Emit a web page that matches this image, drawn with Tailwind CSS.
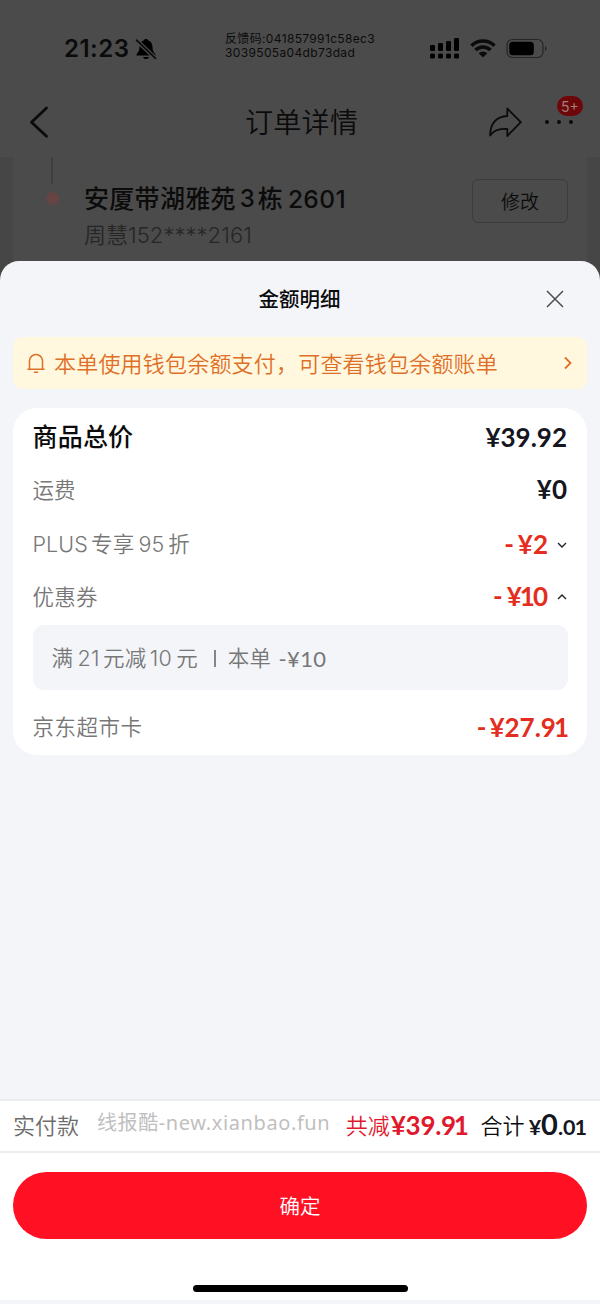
<!DOCTYPE html>
<html lang="zh-CN">
<head>
<meta charset="utf-8">
<title>订单详情</title>
<script src="https://cdn.jsdelivr.net/npm/@tailwindcss/browser@4"></script>
</head>
<body class="bg-[#4b4b4b]">
<div class="flex h-[1304px] w-[600px] flex-col overflow-hidden bg-[#4b4b4b] font-['Inter','Noto_Sans_CJK_SC',sans-serif] whitespace-nowrap text-[#0b0b0c]">

  <!-- status bar -->
  <div class="flex h-[87px] shrink-0 items-start pl-16 pt-[33px]">
    <div class="flex h-8 w-[70px] items-center text-[24px] font-semibold tracking-[0.5px]">21:23</div>
    <svg class="mt-1 h-6 w-6" viewBox="0 0 24 24">
      <path d="M12 2c-1.300 0-2 .7-2.300 1.500C6.500 4.500 5.700 7 5.500 10c-.2 4-1 5-3 7.200V18.500h19V17.200c-2-2.200-2.800-3.200-3-7.200-.2-3-1-5.500-4.200-6.500C14 2.700 13.300 2 12 2zM9 20c.6 1.500 1.600 2 3 2s2.400-.5 3-2z"/>
      <path d="M3 3.700 20.500 20.500" stroke="#4b4b4b" stroke-width="4.200"/>
      <path d="M2.500 3.200 21.500 21.300" stroke="#0b0b0c" stroke-width="1.700" stroke-linecap="round"/>
    </svg>
    <div class="ml-[67px] w-[205px] text-[12px] leading-[14px] tracking-[0.35px] -mt-px">反馈码:041857991c58ec3<br>3039505a04db73dad</div>
    <svg class="mt-[5px] h-[22px] w-[30px]" viewBox="0 0 30 22">
      <rect x="0" y="7" width="5" height="6" rx="1.300"/><rect x="8" y="5" width="5" height="8" rx="1.300"/><rect x="16" y="3" width="5" height="10" rx="1.300"/><rect x="24" y="0" width="5" height="13" rx="1.300"/>
      <rect x="0" y="15.500" width="5" height="5" rx="1.500"/><rect x="8" y="15.500" width="5" height="5" rx="1.500"/><rect x="16" y="15.500" width="5" height="5" rx="1.500"/><rect x="24" y="15.500" width="5" height="5" rx="1.500"/>
    </svg>
    <svg class="ml-[10px] mt-[5px] h-[20px] w-[26px]" viewBox="0 0 26 20" fill="none" stroke="#0b0b0c">
      <path d="M1.500 7.700a16.500 16.500 0 0 1 23 0" stroke-width="3.600"/>
      <path d="M5.500 12a10.800 10.800 0 0 1 15 0" stroke-width="3.400"/>
      <path d="M8.700 15.300a6.200 6.200 0 0 1 8.600 0L13 19.500z" fill="#0b0b0c" stroke="none"/>
    </svg>
    <svg class="ml-[10px] mt-[5px] h-[20px] w-[42px]" viewBox="0 0 42 20">
      <rect x="1" y="1.500" width="36" height="18" rx="5.500" fill="none" stroke="#252525" stroke-width="1.200"/>
      <rect x="3.300" y="3.800" width="24.500" height="13.400" rx="3.500"/>
      <path d="M39 8c2 .8 2 4.200 0 5z" fill="#252525"/>
    </svg>
  </div>

  <!-- navigation bar -->
  <div class="flex h-[70px] shrink-0 items-center">
    <svg class="ml-7 h-9 w-[22px]" viewBox="0 0 22 36" fill="none" stroke="#0b0b0c" stroke-width="2.800" stroke-linecap="round" stroke-linejoin="round"><path d="M18.500 4 3.500 18.200 18.500 32.200"/></svg>
    <div class="ml-[195px] mt-[2px] w-[242px] text-[28px] leading-[36px] tracking-[0.3px] font-[350]">订单详情</div>
    <svg class="-mt-px h-[34px] w-[36px]" viewBox="0 0 36 34" fill="none" stroke="#0b0b0c" stroke-width="1.800" stroke-linejoin="round"><path d="M20.300 3.500 33.800 17.200 20.300 31V24C12 23 7 25 3.200 30.500 3 19 9 11.500 20.300 11z"/></svg>
    <div class="relative ml-[22px] flex gap-2">
      <i class="h-1 w-1 rounded-full bg-[#0b0b0c]"></i><i class="h-1 w-1 rounded-full bg-[#0b0b0c]"></i><i class="h-1 w-1 rounded-full bg-[#0b0b0c]"></i>
      <div class="absolute -top-[24px] left-[12px] flex h-5 w-[26px] items-center justify-center rounded-full bg-[#6e0709] text-[14px] text-[#a07c7c]">5+</div>
    </div>
  </div>

  <!-- address card behind the sheet -->
  <div class="flex h-[104px] shrink-0 bg-[#464646] px-[13px]">
    <div class="flex h-full w-full bg-[#4b4b4b]">
      <div class="ml-[32px] flex w-[14px] flex-col items-center">
        <div class="h-[27px] w-[1.500px] bg-[#404040]"></div>
        <div class="mt-[8px] h-[13px] w-[13px] rounded-full bg-[#674444]"></div>
      </div>
      <div class="ml-[25px] w-[388px]">
        <div class="mt-[24px] flex h-[36px] items-center text-[25px] font-medium"><span class="mt-px tracking-[0.3px]">安厦带湖雅苑</span><span class="ml-[4px] text-[24px]">3</span><span class="mt-px ml-[3px]">栋</span><span class="ml-[5px] text-[24.500px] tracking-[0.4px]">2601</span></div>
        <div class="mt-[2px] flex h-[32px] items-center text-[22px] font-[350] text-[#262626]"><span>周慧</span><span class="text-[22px] tracking-[0.05px]">152****2161</span></div>
      </div>
      <div class="mt-[22px] flex h-[44px] w-[96px] items-center justify-center rounded-[6px] border border-[#3c3c3c] pt-[5px] text-[19px] font-[350]">修改</div>
    </div>
  </div>

  <!-- bottom sheet -->
  <div class="relative flex h-[1043px] w-full shrink-0 flex-col">
    <div class="absolute inset-x-0 top-0 h-5 bg-[#464646]"></div>
    <div class="absolute inset-x-[13px] top-0 h-5 bg-[#4b4b4b]"></div>
    <div class="relative flex h-full flex-col rounded-t-[19px] bg-[#f4f5f9]">
      <div class="flex h-[76px] items-center justify-center text-[20.5px] font-medium">
        <span class="ml-[76px] mt-[3px] flex-1 text-center">金额明细</span>
        <svg class="mr-[35px] ml-[22px] h-5 w-5" viewBox="0 0 20 20" fill="none" stroke="#4a4a50" stroke-width="1.500"><path d="M2 2 18 18M18 2 2 18"/></svg>
      </div>

      <div class="mx-[13px] flex h-[52px] items-center rounded-[9px] bg-[#fff8df] text-[#df6f26]">
        <svg class="ml-[13px] h-[22px] w-5" viewBox="0 0 20 22" fill="none" stroke="currentColor" stroke-width="1.500" stroke-linecap="round" stroke-linejoin="round"><path d="M2 17.200H18M3.500 17V9a6.500 6.500 0 0 1 13 0V17M8.500 20.300h3"/></svg>
        <span class="ml-[8px] mt-[2px] flex-1 text-[22px] font-[350] tracking-[0.2px]">本单使用钱包余额支付，可查看钱包余额账单</span>
        <svg class="mr-[14px] h-4 w-[10px]" viewBox="0 0 10 16" fill="none" stroke="currentColor" stroke-width="1.800"><path d="M2 2.500 7.500 8 2 13.500"/></svg>
      </div>

      <div class="mx-[13px] mt-[19px] flex h-[347px] flex-col rounded-[24px] bg-white pr-[19px] pl-[19.500px] text-[21.500px] font-[350] text-[#777]">
        <div class="flex h-[56px] items-center justify-between">
          <span class="mt-[4px] text-[25px] font-medium tracking-[0.2px] text-[#0b0b0c]">商品总价</span>
          <span class="mt-[4px] mr-px font-[Lato] text-[26px] font-bold text-[#15161f]">¥39.92</span>
        </div>
        <div class="flex h-[52px] items-center justify-between">
          <span>运费</span>
          <span class="mr-px font-[Lato] text-[26px] font-bold text-[#15161f]">¥0</span>
        </div>
        <div class="flex h-[56px] items-center pt-[2px] pr-px">
          <span class="flex-1"><span class="tracking-[0.1px]">PLUS</span><span class="ml-[3px] tracking-[0.3px]">专享</span><span class="ml-[4px]">95</span><span class="ml-[4px]">折</span></span>
          <span class="font-[Lato] text-[26px] font-bold text-[#e42d20]"><span class="mr-1">-</span>¥2</span>
          <svg class="ml-[9px] h-3 w-[10px]" viewBox="0 0 10 12" fill="none" stroke="#222" stroke-width="1.400"><path d="M1 4 5 8 9 4"/></svg>
        </div>
        <div class="flex h-[50px] items-center pt-px pr-px">
          <span class="flex-1 tracking-[0.3px]">优惠券</span>
          <span class="font-[Lato] text-[26px] font-bold text-[#e42d20]"><span class="mr-1">-</span>¥<span class="-mr-[2px] -ml-[2px]">1</span>0</span>
          <svg class="ml-[9px] h-3 w-[10px]" viewBox="0 0 10 12" fill="none" stroke="#222" stroke-width="1.400"><path d="M1 8 5 4 9 8"/></svg>
        </div>
        <div class="mt-[4px] flex h-[65px] items-center rounded-[11px] bg-[#f4f5f9] pl-[19px] pt-px tracking-[0.4px]">
          <span>满</span><span class="ml-[4px]">21</span><span class="ml-[3px]">元减</span><span class="ml-[3px]">10</span><span class="ml-[4px]">元</span>
          <i class="ml-[16px] h-[17px] w-[1.500px] bg-[#858585]"></i>
          <span class="ml-[12px]">本单</span><span class="ml-[7px] font-[Lato] text-[22px] font-normal">-¥10</span>
        </div>
        <div class="mt-[9px] flex h-[56px] items-center justify-between">
          <span class="mt-px tracking-[0.5px]">京东超市卡</span>
          <span class="-mr-px font-[Lato] text-[26px] font-bold text-[#e42d20]"><span class="mr-[3px]">-</span>¥27.9<span class="-ml-[2px]">1</span></span>
        </div>
      </div>

      <div class="mt-auto flex h-[54px] items-center border-y-2 border-[#ebecee] bg-white px-[13px] text-[22px] font-[350]">
        <span class="text-[#6c6c6c]">实付款</span>
        <span class="-mt-[7px] ml-[18px] font-['Noto_Sans','Noto_Sans_CJK_SC',sans-serif] text-[20px] font-normal tracking-[0.6px] text-[#bfbfbf]">线报酷-new.xianbao.fun</span>
        <span class="ml-auto text-[#e01a2c]">共减</span><span class="-mt-[2px] ml-[1px] font-[Lato] text-[26px] font-bold tracking-[-0.3px] text-[#e01a2c]">¥39.9<span class="-ml-[2px] -mr-[2px]">1</span></span>
        <span class="ml-[14px]">合计</span>
        <span class="-mt-[5px] ml-[4px] flex items-baseline font-[Lato] text-[21.500px] font-bold text-[#15161f]">¥<span class="text-[29px]">0</span>.0<span class="-ml-px">1</span></span>
      </div>

      <div class="flex h-[147px] flex-col items-center bg-white">
        <div class="mt-[19px] flex h-[67px] w-[574px] items-center justify-center rounded-full bg-[#ff1023] pt-[4px] text-[20.5px] font-[350] text-white">确定</div>
        <div class="mt-[46px] h-[7px] w-[215px] rounded-full bg-black"></div>
      </div>
      <div class="h-1 bg-[#f4f5f9]"></div>
    </div>
  </div>
</div>
</body>
</html>
